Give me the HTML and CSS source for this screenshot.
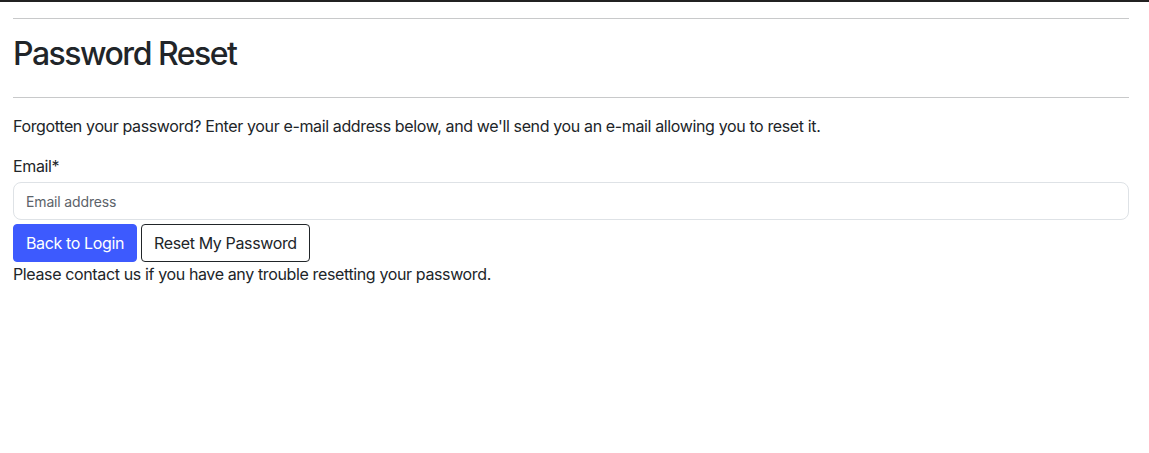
FILE: index.html
```html
<!DOCTYPE html>
<html lang="en">
<head>
<meta charset="utf-8">
<title>Password Reset</title>
<link rel="stylesheet" href="styles.css">
</head>
<body>
<div class="topbar"></div>
<main class="container">
  <hr class="rule">
  <h1 class="title">Password Reset</h1>
  <hr class="rule">
  <p class="intro">Forgotten your password? Enter your e-mail address below, and we'll send you an e-mail allowing you to reset it.</p>
  <form class="form">
    <label class="label" for="email">Email*</label>
    <input class="input" id="email" type="email" placeholder="Email address">
    <div class="actions">
      <button type="button" class="btn btn-primary">Back to Login</button>
      <button type="submit" class="btn btn-outline">Reset My Password</button>
    </div>
  </form>
  <p class="note">Please contact us if you have any trouble resetting your password.</p>
</main>
</body>
</html>
```

FILE: styles.css
```css
* { box-sizing: border-box; }
html, body { margin: 0; padding: 0; background: #fff; }
body {
  font-family: "Inter", "Noto Sans", "Liberation Sans", sans-serif;
  font-size: 16px;
  line-height: 24px;
  letter-spacing: -0.37px;
  color: #212529;
}
.topbar { height: 2px; background: #212121; }
.container {
  display: flex;
  flex-direction: column;
  padding: 0 20px 0 13px;
}
.rule {
  margin: 16px 0;
  border: 0;
  border-top: 1px solid #c8c9ca;
  height: 0;
}
.title {
  margin: 0 0 8px;
  font-size: 32px;
  line-height: 38.4px;
  font-weight: 500;
  letter-spacing: -1.5px;
}
.intro { margin: 0 0 16px; }
.form { display: flex; flex-direction: column; }
.label { display: block; margin-bottom: 4px; }
.input {
  width: 100%;
  height: 38px;
  padding: 6px 12px;
  font: inherit;
  font-size: 14px;
  letter-spacing: -0.15px;
  color: #212529;
  border: 1px solid #dee2e6;
  border-radius: 8px;
  outline: none;
}
.input::placeholder { color: #5c636a; }
.actions { display: flex; gap: 4px; margin-top: 4px; }
.btn {
  height: 38px;
  padding: 6px 12px;
  font: inherit;
  font-size: 16px;
  line-height: 24px;
  letter-spacing: -0.37px;
  border-radius: 4px;
  cursor: pointer;
}
.btn-primary { background: #3d5afe; color: #fff; border: 1px solid #3d5afe; }
.btn-outline { background: #fff; color: #212529; border: 1px solid #212529; }
.note { margin: 0; }
```
